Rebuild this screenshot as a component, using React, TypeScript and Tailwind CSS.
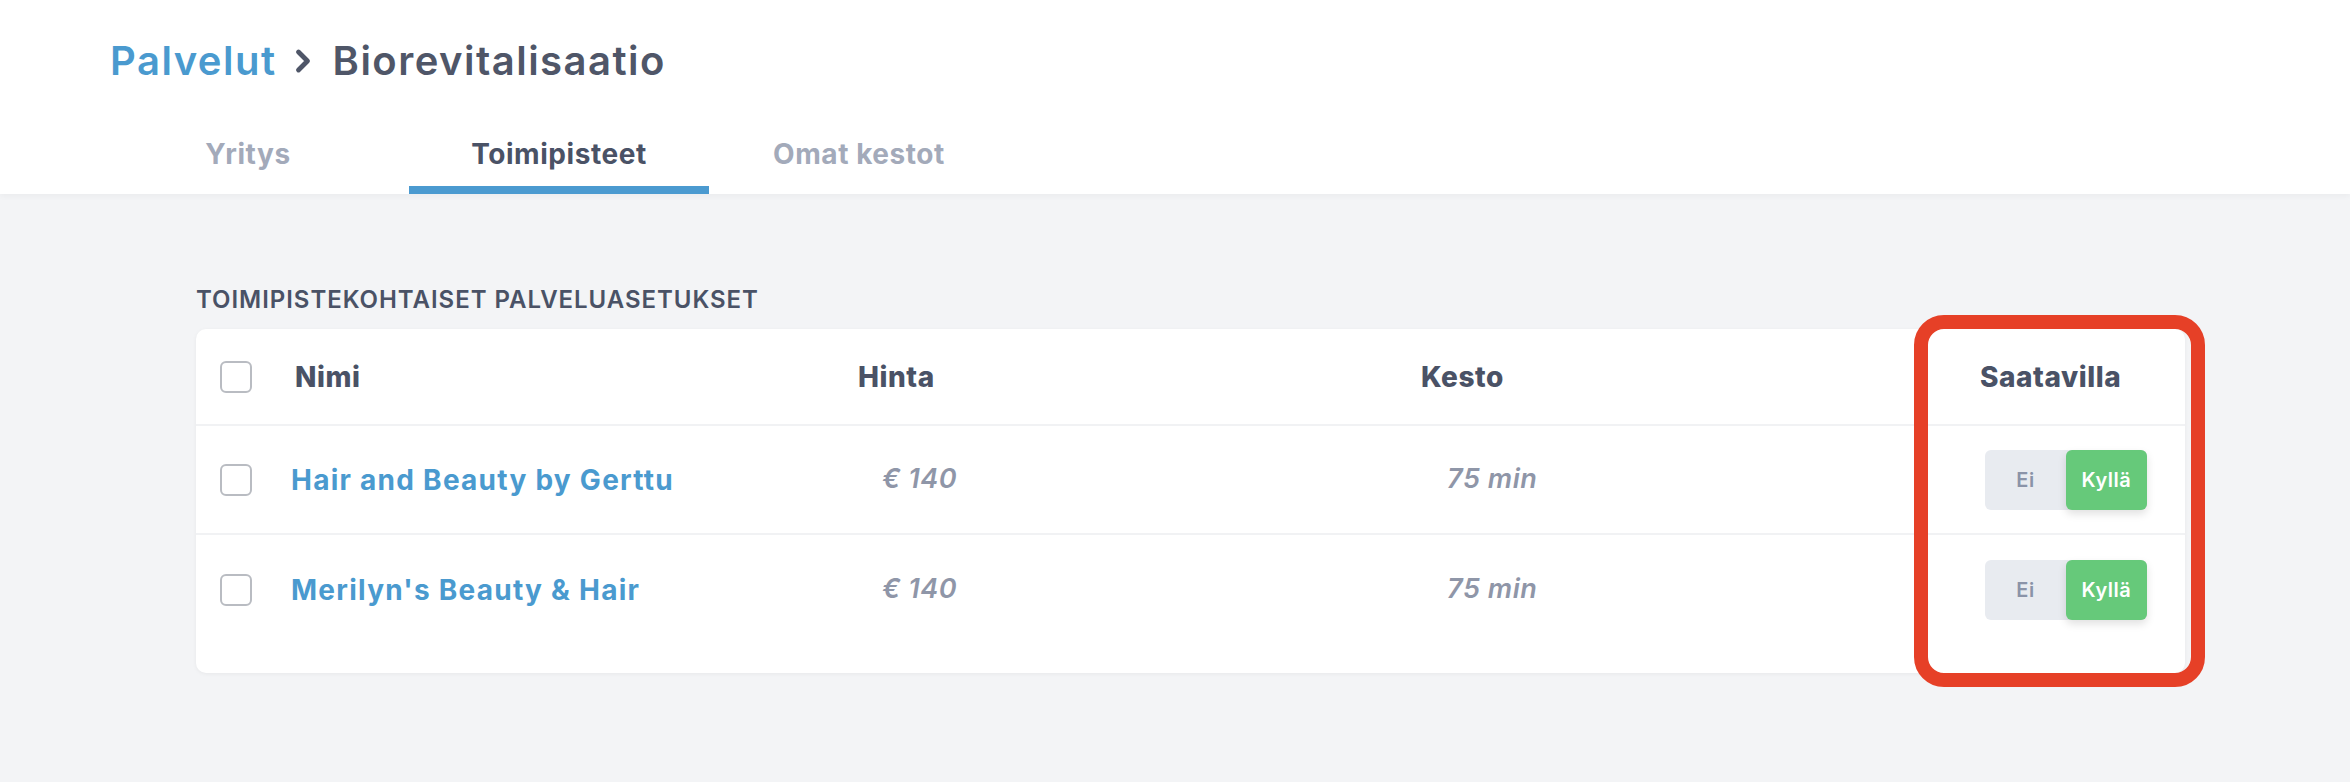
import { ChevronRight } from "lucide-react";

type Row = { name: string; price: string; duration: string };

const ROWS: Row[] = [
  { name: "Hair and Beauty by Gerttu", price: "€ 140", duration: "75 min" },
  { name: "Merilyn's Beauty & Hair", price: "€ 140", duration: "75 min" },
];

function Checkbox() {
  return <div className="h-[32px] w-[32px] shrink-0 rounded-[6px] border-2 border-[#b9bcc2] bg-white" />;
}

function Toggle() {
  return (
    <div className="flex h-[60px] w-[162px] rounded-[6px] bg-[#e8ebf0]">
      <div className="flex w-[81px] items-center justify-center text-[20px] font-semibold text-[#8a93a8]">Ei</div>
      <div className="flex w-[81px] items-center justify-center rounded-[6px] bg-[#66c97a] text-[20px] font-semibold text-white shadow-[0_4px_8px_rgba(0,0,0,0.12)]">
        Kyllä
      </div>
    </div>
  );
}

export default function App() {
  return (
    <div className="relative h-[782px] w-full overflow-hidden bg-[#f3f4f6] font-['Inter',sans-serif] tracking-[0.035em]">
      <header className="relative z-10 h-[194px] bg-white shadow-[0_2px_6px_rgba(0,0,0,0.04)]">
        <div className="flex items-center pl-[110px] pt-[37px] text-[40px] font-semibold leading-[48px] tracking-[0.037em]">
          <span className="text-[#4a9acf]">Palvelut</span>
          <ChevronRight className="ml-[8px] mr-[12px] h-[36px] w-[36px] text-[#4f5668]" strokeWidth={3.2} />
          <span className="text-[#4f5668]">Biorevitalisaatio</span>
        </div>
        <nav className="mt-[37px] flex pl-[98px] text-[28px] font-bold">
          <div className="flex h-[72px] w-[300px] items-center justify-center border-b-[8px] border-transparent text-[#a3aaba]">
            Yritys
          </div>
          <div className="ml-[11px] flex h-[72px] w-[300px] items-center justify-center border-b-[8px] border-[#4b9ad0] text-[#4a5266]">
            Toimipisteet
          </div>
          <div className="flex h-[72px] w-[300px] items-center justify-center border-b-[8px] border-transparent text-[#a3aaba]">
            Omat kestot
          </div>
        </nav>
      </header>

      <main className="pl-[196px] pt-[91px]">
        <h2 className="text-[24px] font-semibold uppercase leading-[30px] tracking-[0.04em] text-[#4a5266]">
          Toimipistekohtaiset palveluasetukset
        </h2>

        <section className="mt-[14px] w-[1989px] rounded-[10px] bg-white pb-[29px] shadow-[0_1px_4px_rgba(0,0,0,0.05)]">
          <div className="flex h-[97px] items-center border-b-2 border-[#f1f2f4] pl-[24px] text-[28px] font-extrabold text-[#4a5266]">
            <Checkbox />
            <div className="ml-[43px] w-[563px]">Nimi</div>
            <div className="w-[563px]">Hinta</div>
            <div className="w-[559px]">Kesto</div>
            <div className="w-[150px]">Saatavilla</div>
          </div>

          {ROWS.map((row, i) => (
            <div
              key={row.name}
              className={`flex h-[109px] items-center pl-[24px] ${i === 0 ? "border-b-2 border-[#f1f2f4]" : ""}`}
            >
              <Checkbox />
              <div className="ml-[39px] w-[567px] text-[28px] font-bold tracking-[0.045em] text-[#4a9acf]">{row.name}</div>
              <div className="w-[563px] pl-[24px] text-[27px] font-semibold italic text-[#8f96a8]">{row.price}</div>
              <div className="w-[560px] pl-[26px] text-[27px] font-semibold italic text-[#8f96a8]">{row.duration}</div>
              <div className="pl-[4px]">
                <Toggle />
              </div>
            </div>
          ))}
        </section>
      </main>

      <div className="absolute left-[1914px] top-[315px] h-[372px] w-[291px] rounded-[30px] border-[14px] border-[#e64027]" />
    </div>
  );
}
